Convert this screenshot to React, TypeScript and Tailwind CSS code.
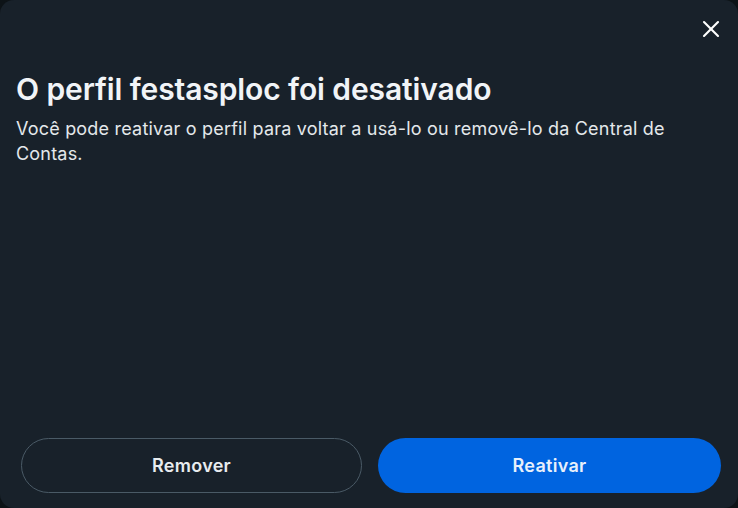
import { X } from 'lucide-react'

// Diálogo de perfil desativado
const App = () => {
  return (
    <div className="w-[738px] h-[508px] bg-[#0d1317]" style={{ fontFamily: 'Inter, "Noto Sans", sans-serif' }}>
      <div className="w-full h-full rounded-[14px] bg-[#18212a] flex flex-col text-white">
        <div className="flex justify-end pt-[14px] pr-[12px]">
          <button className="w-[30px] h-[30px] flex items-center justify-center text-white">
            <X size={28} strokeWidth={1.8} />
          </button>
        </div>

        <div className="px-4 pt-[27px]">
          <h1 className="text-[30px] leading-[36px] font-semibold tracking-[-0.1px] text-[#f1f4f7]">
            O perfil festasploc foi desativado
          </h1>
          <p className="mt-[9px] text-[18px] leading-[25px] tracking-[0.2px] text-[#e4e8eb]">
            Você pode reativar o perfil para voltar a usá-lo ou removê-lo da Central de Contas.
          </p>
        </div>

        <div className="mt-auto flex gap-4 pl-[21px] pb-[15px]">
          <button className="w-[341px] h-[55px] rounded-full border border-[#4a5a66] text-[18px] tracking-[0.3px] font-semibold text-[#e8ecef]">
            Remover
          </button>
          <button className="w-[343px] h-[55px] rounded-full bg-[#0064e0] text-[18px] tracking-[0.3px] font-semibold text-[#e8f0fb]">
            Reativar
          </button>
        </div>
      </div>
    </div>
  )
}

export default App
